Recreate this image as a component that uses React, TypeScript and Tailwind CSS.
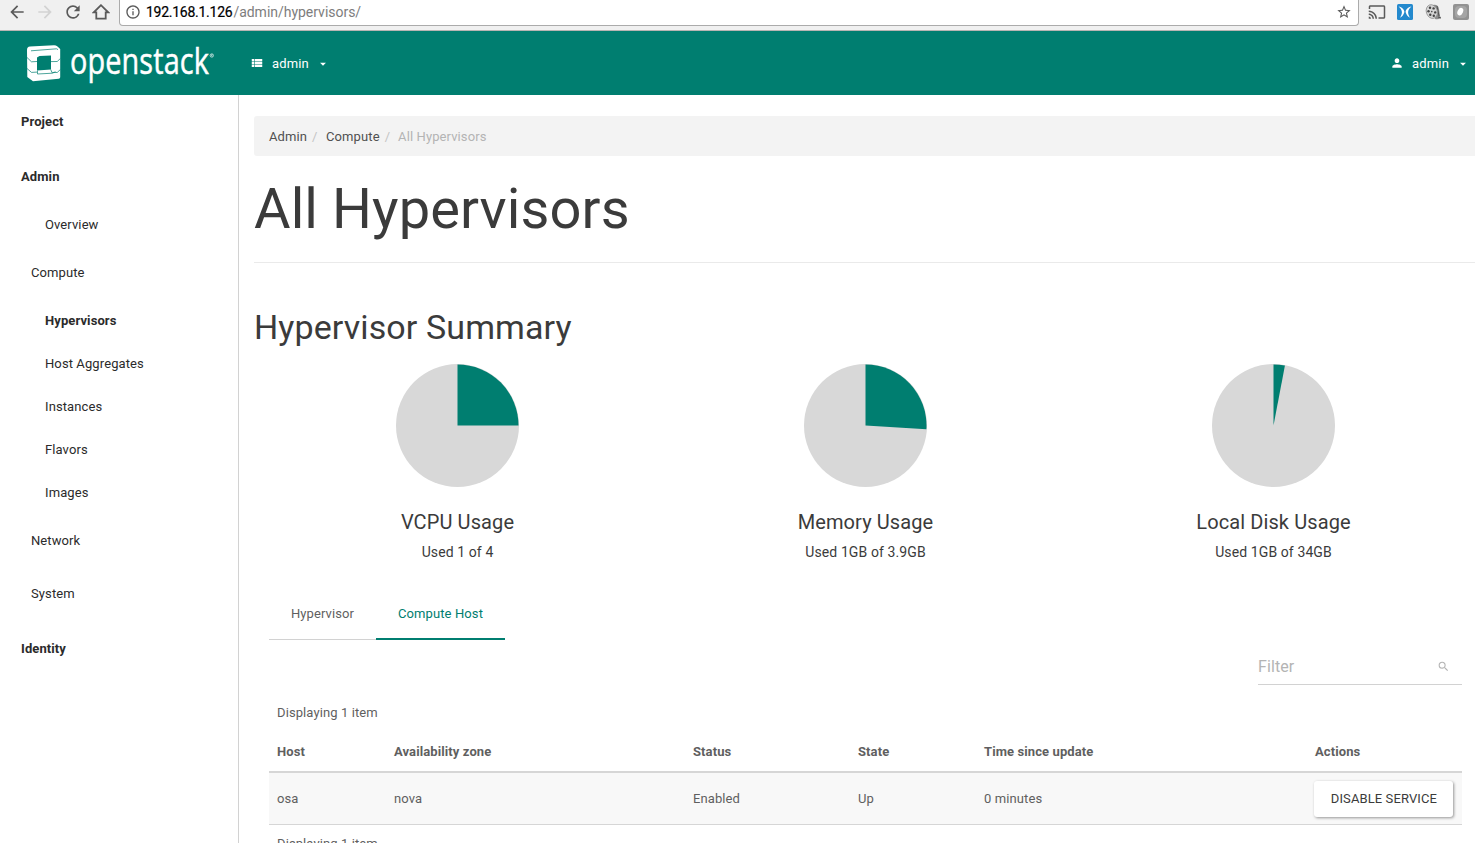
import React from "react";
import {
  MdArrowBack,
  MdArrowForward,
  MdRefresh,
  MdInfoOutline,
  MdStarBorder,
  MdCast,
  MdViewList,
  MdPerson,
  MdArrowDropDown,
  MdSearch,
} from "react-icons/md";

function BrowserBar() {
  return (
    <div className="flex h-[31px] shrink-0 items-start border-b border-[#b9b5b3] bg-[#f0f0f0] text-[#5a5a5a]">
      <MdArrowBack className="mt-[2px] ml-[7px] size-5" />
      <MdArrowForward className="mt-[2px] ml-2 size-5 text-[#d2d2d2]" />
      <MdRefresh className="mt-[2px] ml-2 size-5" />
      <svg className="mt-[3px] ml-[9px] size-[18px]" viewBox="0 0 18 18" fill="none" stroke="currentColor" strokeWidth="1.8">
        <path d="M9 2.2 1.8 9.3H4.3V15.6H13.7V9.3H16.2Z" />
      </svg>
      <div className="ml-[9px] flex h-[26px] w-[1240px] items-start rounded-b-[4px] border border-t-0 border-[#ababab] bg-white">
        <MdInfoOutline className="mt-[4px] ml-[5px] size-4" />
        <div className="mt-[2px] ml-[5px] font-[Roboto,sans-serif] text-[14px] leading-5 tracking-[-0.02px] text-[#7d7d7d]">
          <span className="tracking-[-0.26px] text-black [-webkit-text-stroke:0.2px_black]">192.168.1.126</span>
          <span className="ml-px">/admin/hypervisors/</span>
        </div>
        <MdStarBorder className="mt-[4px] mr-[6px] ml-auto size-4" />
      </div>
      <MdCast className="mt-[3px] ml-[9px] size-[18px]" />
      <svg className="mt-1 ml-[11px] size-4" viewBox="0 0 16 16">
        <rect width="16" height="16" rx="1.5" fill="#2389cd" />
        <path
          d="M1.6 2.4C4.8 2.8 7.2 5.2 7.4 8 6.8 10.6 5.2 12.6 3 13.8 4.2 11.6 5 9.6 4.9 8 4.7 5.6 3.4 3.8 1.6 2.4ZM14.4 2.4C11.2 2.8 8.8 5.2 8.6 8c.6 2.6 2.2 4.6 4.4 5.8-1.2-2.2-2-4.2-1.900-5.800.2-2.400 1.500-4.200 3.300-5.600Z"
          fill="#fff"
        />
      </svg>
      <svg className="mt-1 ml-3 h-4 w-[17px]" viewBox="0 0 17 16">
        <path d="M8 1q5-1 6 4l1 7 1 2q-3 2-6 1z" fill="#8c8c8c" />
        <path d="m12 2 2 10m-1 1 3 1" stroke="#555" fill="none" />
        <ellipse cx="6.8" cy="7.5" rx="5.5" ry="7" fill="#d6d6d6" stroke="#888" strokeWidth=".7" transform="rotate(-18 7 7.5)" />
        <g fill="#444">
          <circle cx="5" cy="3.7" r="1.2" />
          <circle cx="8.6" cy="4.4" r="1.2" />
          <circle cx="3.5" cy="7.3" r="1.2" />
          <circle cx="6.8" cy="7.6" r=".8" />
          <circle cx="10.2" cy="8.4" r="1.2" />
          <circle cx="5.3" cy="10.8" r="1.2" />
          <circle cx="8.8" cy="11.8" r="1.2" />
        </g>
      </svg>
      <svg className="mt-1 ml-[11px] size-4" viewBox="0 0 16 16">
        <rect width="16" height="16" rx="2" fill="#929292" />
        <rect x="2" y="2" width="12" height="12" rx="4" fill="#a5a5a5" />
        <ellipse cx="7.3" cy="7.6" rx="2.7" ry="3.9" fill="#fff" transform="rotate(25 7.3 7.6)" />
      </svg>
    </div>
  );
}

function Logo() {
  return (
    <svg className="ml-[26px] h-14 w-[190px] overflow-visible" viewBox="26 35 190 56">
      <path
        d="M27 50q0-3 3-3.4L54 45.2q2 0 3.5 1.4L60.2 49V77.2q0 1.3-1.5 1.5L33 81.2 27.3 77Z"
        fill="#fff"
      />
      <path d="M37 57.4 39.5 56l11.5-.4V69.6L37 70.6Z" fill="#007e70" />
      <g fill="none" stroke="#007e70" strokeWidth="0.7">
        <path d="M31 50.8 56.5 48.8l1.5.8M27 57.5l4.5 4.3 5.5-.3M27 68.5l4.5 3.9 5.5-.3M60.4 58.5l-3.2 3-6.4.1M60.4 69.5l-3.2 3-5.4-.1-1-2.8M37.5 70.6v3.4l15-.8 3-1.5" />
      </g>
      <text x="70" y="74" fontFamily="'Open Sans', sans-serif" fontSize="36.5" fill="#fff" stroke="#fff" strokeWidth="0.5" textLength="139" lengthAdjust="spacingAndGlyphs">
        openstack
      </text>
      <circle cx="211.8" cy="55.5" r="1.7" fill="none" stroke="#fff" strokeWidth="0.6" />
      <path d="M211.3 56.5v-2h1v1h-1l1 1" fill="none" stroke="#fff" strokeWidth="0.4" />
    </svg>
  );
}

function Header() {
  return (
    <header className="flex h-16 shrink-0 items-center bg-[#007e70] text-[13px] tracking-[0.15px] text-white">
      <Logo />
      <MdViewList className="ml-[34px] size-[14px]" />
      <span className="mt-[2px] ml-[8px]">admin</span>
      <MdArrowDropDown className="mt-px ml-[7px] size-[14px]" />
      <MdPerson className="ml-auto size-[14px]" />
      <span className="mt-[2px] ml-[8px]">admin</span>
      <MdArrowDropDown className="mt-px mr-[5px] ml-[7px] size-[14px]" />
    </header>
  );
}

const nav = [
  { label: "Project", cls: "mt-[15px] pl-[21px] font-bold" },
  { label: "Admin", cls: "mt-[31px] pl-[21px] font-bold" },
  { label: "Overview", cls: "mt-6 pl-[45px]" },
  { label: "Compute", cls: "mt-6 pl-[31px]" },
  { label: "Hypervisors", cls: "mt-6 pl-[45px] font-bold" },
  { label: "Host Aggregates", cls: "mt-[19px] pl-[45px]" },
  { label: "Instances", cls: "mt-[19px] pl-[45px]" },
  { label: "Flavors", cls: "mt-[19px] pl-[45px]" },
  { label: "Images", cls: "mt-[19px] pl-[45px]" },
  { label: "Network", cls: "mt-6 pl-[31px]" },
  { label: "System", cls: "mt-[29px] pl-[31px]" },
  { label: "Identity", cls: "mt-[31px] pl-[21px] font-bold" },
];

function Sidebar() {
  return (
    <nav className="w-[239px] shrink-0 border-r border-[#d2d2d2] text-[13px] leading-6 tracking-[0.1px] text-[#2b2b2b]">
      {nav.map((item) => (
        <div key={item.label} className={item.cls}>
          {item.label}
        </div>
      ))}
    </nav>
  );
}

const usage = [
  { title: "VCPU Usage", text: "Used 1 of 4", share: 0.25 },
  { title: "Memory Usage", text: "Used 1GB of 3.9GB", share: 0.26 },
  { title: "Local Disk Usage", text: "Used 1GB of 34GB", share: 0.03 },
];

function Pie({ share }: { share: number }) {
  const angle = share * 2 * Math.PI;
  const x = 61.5 + 61 * Math.sin(angle);
  const y = 61.5 - 61 * Math.cos(angle);
  return (
    <svg className="h-[123px] w-[124px]" viewBox="0 0 124 123">
      <circle cx="61.5" cy="61.5" r="61.5" fill="#d8d8d8" />
      <path d={`M61.5 61.5V.5A61 61 0 0 1 ${x} ${y}Z`} fill="#007e70" />
    </svg>
  );
}

function UsageCharts() {
  return (
    <div className="grid w-[1224px] grid-cols-3">
      {usage.map((u) => (
        <div key={u.title} className="flex flex-col items-center">
          <Pie share={u.share} />
          <div className="mt-[23px] mr-px text-[20px] leading-6 tracking-[0.1px] text-[#3b3b3b]">{u.title}</div>
          <div className="mt-[6px] mr-px text-[14px] leading-6 tracking-[0.1px] text-[#3b3b3b]">{u.text}</div>
        </div>
      ))}
    </div>
  );
}

const columns = "grid grid-cols-[117px_299px_165px_126px_331px_155px] [&>*]:pl-2";

export default function App() {
  return (
    <div className="flex h-[843px] w-[1475px] flex-col overflow-hidden bg-white font-[Roboto,sans-serif]">
      <BrowserBar />
      <Header />
      <div className="flex min-h-0 flex-1">
        <Sidebar />
        <main className="w-[1236px] shrink-0 overflow-hidden pl-[15px] text-[13px] leading-6 tracking-[0.1px] text-[#5f5f5f]">
          <div className="mt-[21px] flex h-10 items-center rounded-l-[3px] bg-[#f3f3f3] pt-[2px] pl-[15px] text-[#505050]">
            <span>Admin</span>
            <span className="ml-[5px] text-[#c4c4c4]">/</span>
            <span className="ml-[8.5px]">Compute</span>
            <span className="ml-[5px] text-[#c4c4c4]">/</span>
            <span className="ml-[8px] text-[#b4b4b4]">All Hypervisors</span>
          </div>
          <h1 className="mt-[22px] text-[56px] leading-[62px] tracking-[0.1px] text-[#3b3b3b]">All Hypervisors</h1>
          <div className="mt-[22px] border-b border-[#eaeaea]" />
          <h2 className="mt-[45px] text-[34px] leading-[38px] tracking-[0.1px] text-[#3b3b3b]">Hypervisor Summary</h2>
          <div className="mt-[18px]">
            <UsageCharts />
          </div>
          <div className="mt-6 ml-[15px] flex h-[52px] text-center leading-[52px]">
            <div className="w-[107px] border-b border-[#d2d2d2]">Hypervisor</div>
            <div className="w-[129px] border-b-2 border-[#007e70] text-[#007e70]">Compute Host</div>
          </div>
          <div className="mt-[7px] mr-[13px] ml-auto flex h-[38px] w-[204px] items-center border-b border-[#d2d2d2] pt-[2px] text-[16px] text-[#b4b4b4]">
            <span>Filter</span>
            <MdSearch className="mr-3 ml-auto size-[13px]" />
          </div>
          <div className="mr-[13px] ml-[15px]">
            <div className="mt-4 pl-2">Displaying 1 item</div>
            <div className={`${columns} mt-[15px] h-[33px] border-b-2 border-[#d6d6d6] font-bold`}>
              <span>Host</span>
              <span>Availability zone</span>
              <span>Status</span>
              <span>State</span>
              <span>Time since update</span>
              <span>Actions</span>
            </div>
            <div className={`${columns} h-[52px] items-center border-b border-[#d6d6d6] bg-[#f8f8f8]`}>
              <span>osa</span>
              <span>nova</span>
              <span>Enabled</span>
              <span>Up</span>
              <span>0 minutes</span>
              <div className="-ml-[0.6px]">
                <button className="block h-9 w-[139px] rounded-[3px] bg-white text-[13px] tracking-[0.1px] text-[#3b3b3b] shadow-[1px_1px_3px_rgba(0,0,0,0.4)]">
                  DISABLE SERVICE
                </button>
              </div>
            </div>
            <div className="mt-[7px] pl-2">Displaying 1 item</div>
          </div>
        </main>
      </div>
    </div>
  );
}
